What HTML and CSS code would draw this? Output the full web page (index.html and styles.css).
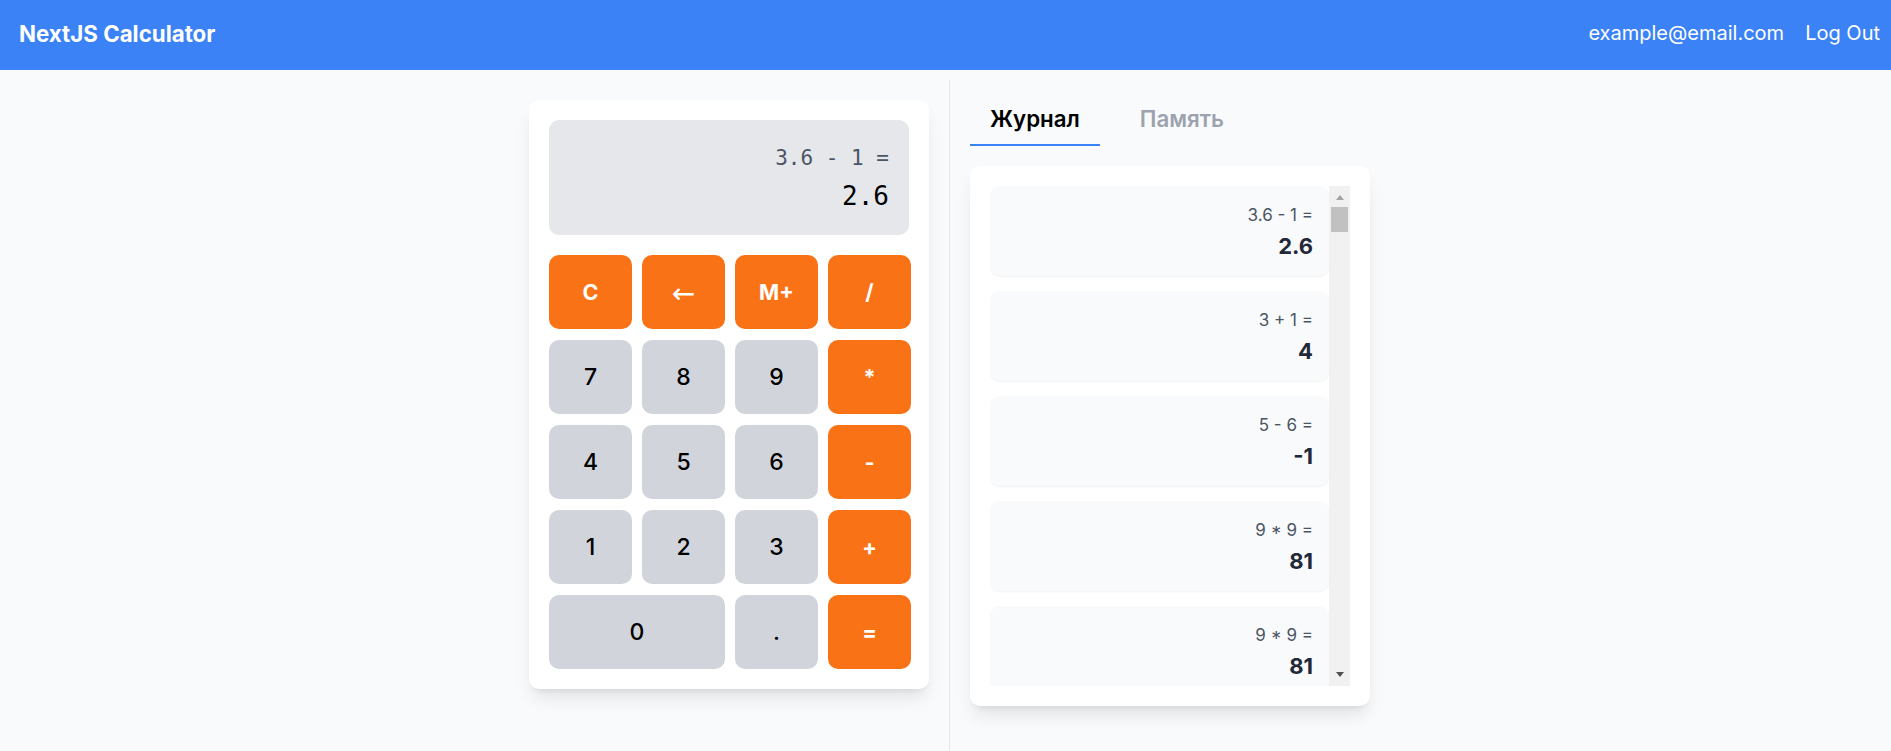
FILE: index.html
```html
<!DOCTYPE html>
<html lang="ru">
<head>
<meta charset="utf-8">
<title>NextJS Calculator</title>
<link rel="stylesheet" href="styles.css">
</head>
<body>
<header class="topbar">
  <h1 class="brand">NextJS Calculator</h1>
  <nav class="account">
    <span class="account-email">example@email.com</span>
    <button class="logout" type="button">Log Out</button>
  </nav>
</header>
<main class="workspace">
  <section class="calculator">
    <div class="display">
      <div class="display-expr">3.6 - 1 =</div>
      <div class="display-value">2.6</div>
    </div>
    <div class="keypad">
      <button class="key key-op" type="button">C</button>
      <button class="key key-op" type="button"><span class="key-arrow">←</span></button>
      <button class="key key-op" type="button">M+</button>
      <button class="key key-op" type="button">/</button>
      <button class="key key-num" type="button">7</button>
      <button class="key key-num" type="button">8</button>
      <button class="key key-num" type="button">9</button>
      <button class="key key-op" type="button">*</button>
      <button class="key key-num" type="button">4</button>
      <button class="key key-num" type="button">5</button>
      <button class="key key-num" type="button">6</button>
      <button class="key key-op" type="button">-</button>
      <button class="key key-num" type="button">1</button>
      <button class="key key-num" type="button">2</button>
      <button class="key key-num" type="button">3</button>
      <button class="key key-op" type="button">+</button>
      <button class="key key-num key-wide" type="button">0</button>
      <button class="key key-num" type="button">.</button>
      <button class="key key-op" type="button">=</button>
    </div>
  </section>
  <aside class="sidebar">
    <div class="tabs">
      <button class="tab tab-active" type="button">Журнал</button>
      <button class="tab" type="button">Память</button>
    </div>
    <div class="panel">
      <div class="history-frame">
        <div class="history">
          <div class="entry"><div class="entry-expr">3.6 - 1 =</div><div class="entry-value">2.6</div></div>
          <div class="entry"><div class="entry-expr">3 + 1 =</div><div class="entry-value">4</div></div>
          <div class="entry"><div class="entry-expr">5 - 6 =</div><div class="entry-value">-1</div></div>
          <div class="entry"><div class="entry-expr">9 * 9 =</div><div class="entry-value">81</div></div>
          <div class="entry"><div class="entry-expr">9 * 9 =</div><div class="entry-value">81</div></div>
        </div>
        <div class="scrollbar" aria-hidden="true">
          <span class="scroll-btn scroll-up"></span>
          <span class="scroll-thumb"></span>
          <span class="scroll-track"></span>
          <span class="scroll-btn scroll-down"></span>
        </div>
      </div>
    </div>
  </aside>
</main>
</body>
</html>
```

FILE: styles.css
```css
* {
  box-sizing: border-box;
}

html,
body {
  margin: 0;
  height: 100%;
}

body {
  font-family: Inter, "Noto Sans", sans-serif;
  background: #f9fafb;
  color: #111827;
}

/* Top bar */
.topbar {
  height: 70px;
  background: #3b82f6;
  color: #ffffff;
  display: flex;
  align-items: center;
  justify-content: space-between;
  padding: 0 11px 4px 19px;
}

.brand {
  margin: 0;
  font-size: 22.3px;
  font-weight: 700;
  line-height: normal;
}

.account {
  display: flex;
  align-items: center;
  gap: 21px;
  font-size: 20px;
}

.logout {
  background: none;
  border: 0;
  padding: 0;
  color: #ffffff;
  font: inherit;
  cursor: pointer;
}

/* Main area */
.workspace {
  display: flex;
  justify-content: center;
  height: calc(100vh - 70px);
  padding: 10px 0 0 8px;
}

.calculator {
  align-self: flex-start;
  margin-top: 20px;
  width: 400px;
  padding: 20px;
  background: #ffffff;
  border-radius: 10px;
  box-shadow: 0 12px 18px -4px rgba(0, 0, 0, 0.1), 0 5px 7px -5px rgba(0, 0, 0, 0.1);
}

.display {
  height: 115px;
  padding: 24px 20px 0;
  background: #e5e7eb;
  border-radius: 10px;
  text-align: right;
  font-family: "DejaVu Sans Mono", "Liberation Mono", monospace;
}

.display-expr {
  font-size: 21px;
  line-height: 28px;
  color: #4b5563;
}

.display-value {
  margin-top: 6px;
  font-size: 26px;
  line-height: 36px;
  color: #000000;
}

.keypad {
  display: grid;
  grid-template-columns: repeat(4, 83px);
  grid-auto-rows: 74px;
  column-gap: 10px;
  row-gap: 11px;
  margin-top: 20px;
}

.key {
  display: flex;
  align-items: center;
  justify-content: center;
  padding: 0;
  border: 0;
  border-radius: 10px;
  font-family: inherit;
  cursor: pointer;
}

.key-num {
  background: #d1d5db;
  color: #000000;
  font-size: 23px;
  font-weight: 500;
}

.key-op {
  background: #f97316;
  color: #ffffff;
  font-size: 21.6px;
  font-weight: 700;
}

.key-arrow {
  font-family: "DejaVu Sans", sans-serif;
  font-size: 28px;
  font-weight: 400;
  line-height: 1;
  padding-top: 4px;
}

.key-wide {
  grid-column: span 2;
}

/* Sidebar */
.sidebar {
  width: 421px;
  margin-left: 20px;
  padding: 14px 0 0 20px;
  border-left: 1px solid #e5e7eb;
}

.tabs {
  display: flex;
  gap: 20px;
}

.tab {
  padding: 10px 20px;
  background: none;
  border: 0;
  border-bottom: 2px solid transparent;
  font-family: inherit;
  font-size: 22.3px;
  font-weight: 600;
  line-height: 30px;
  color: #9ca3af;
  cursor: pointer;
}

.tab-active {
  color: #000000;
  border-bottom-color: #3b82f6;
}

.panel {
  margin-top: 20px;
  width: 400px;
  height: 540px;
  padding: 20px;
  background: #ffffff;
  border-radius: 10px;
  box-shadow: 0 12px 18px -4px rgba(0, 0, 0, 0.1), 0 5px 7px -5px rgba(0, 0, 0, 0.1);
}

.history-frame {
  display: flex;
  height: 500px;
}

.history {
  flex: 1;
  min-width: 0;
  overflow: hidden;
  display: flex;
  flex-direction: column;
  gap: 15px;
}

.entry {
  flex-shrink: 0;
  height: 90px;
  padding: 17px 16px 0;
  background: #f9fafb;
  border-radius: 10px;
  text-align: right;
  box-shadow: 0 1px 2px rgba(0, 0, 0, 0.06);
}

.entry-expr {
  font-size: 17px;
  line-height: 24px;
  color: #4b5563;
}

.entry-value {
  margin-top: 4px;
  font-size: 22px;
  line-height: 30px;
  font-weight: 700;
  color: #1f2937;
}

/* Classic scrollbar drawn beside the list */
.scrollbar {
  flex: 0 0 21px;
  display: flex;
  flex-direction: column;
  background: #f1f1f1;
}

.scroll-btn {
  flex: 0 0 21px;
  display: flex;
  align-items: center;
  justify-content: center;
}

.scroll-up {
  padding-top: 2px;
}

.scroll-down {
  padding-bottom: 2px;
}

.scroll-up::before,
.scroll-down::before {
  content: "";
  width: 0;
  height: 0;
  border-left: 4.5px solid transparent;
  border-right: 4.5px solid transparent;
}

.scroll-up::before {
  border-bottom: 5px solid #a3a3a3;
}

.scroll-down::before {
  border-top: 5px solid #505050;
}

.scroll-thumb {
  flex: 0 0 25px;
  margin: 0 2px;
  background: #c1c1c1;
}

.scroll-track {
  flex: 1;
}
```
